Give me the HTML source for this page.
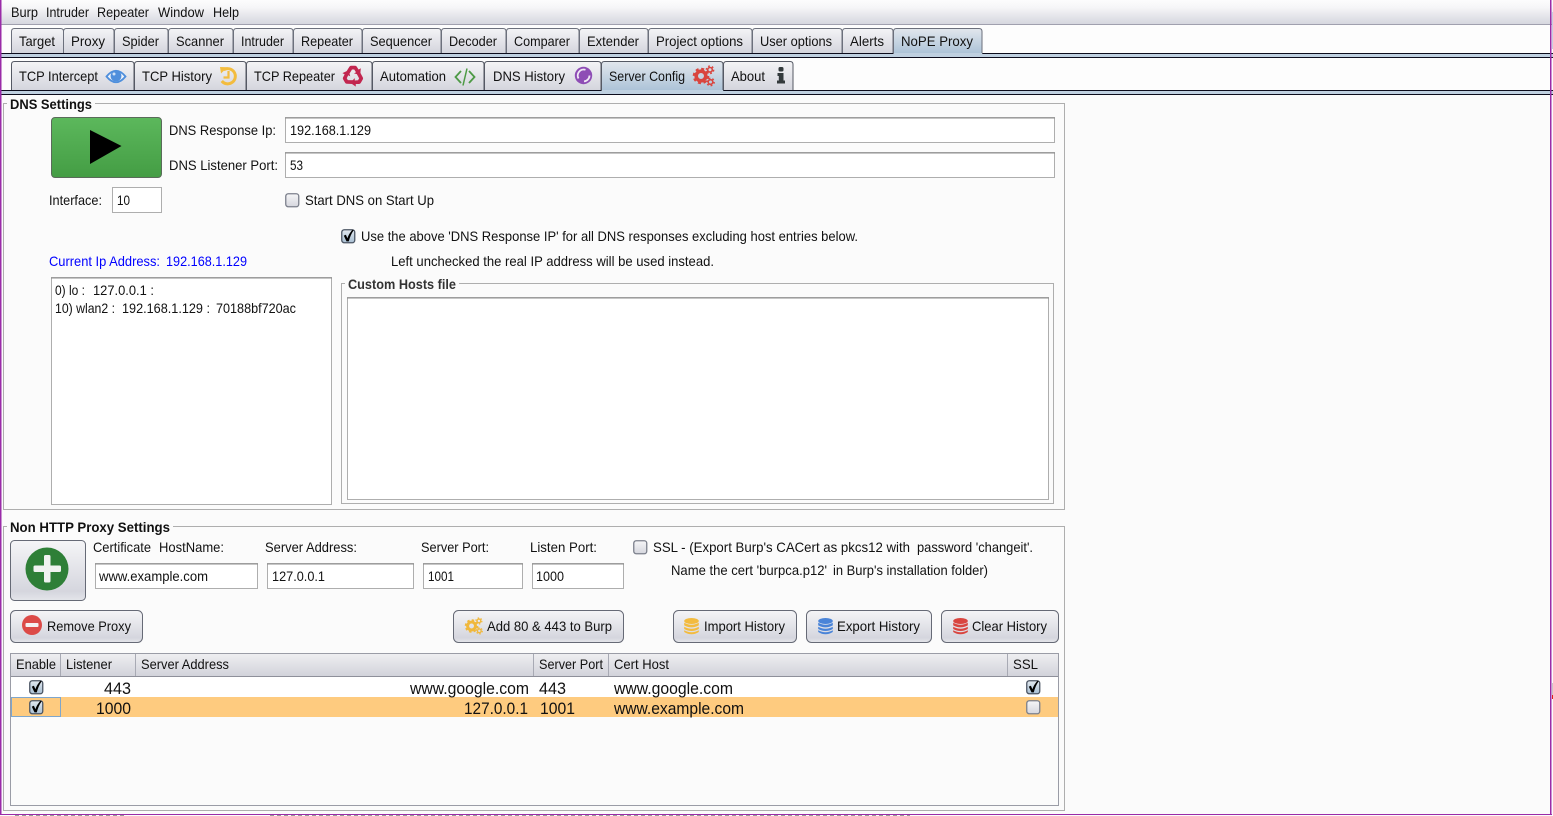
<!DOCTYPE html>
<html><head><meta charset="utf-8"><title>NoPE Proxy</title>
<style>
html,body{margin:0;padding:0;background:#fbfbfb;overflow:hidden;width:1553px;height:816px}
svg{display:block;position:absolute;left:0;top:0}
text{font-family:"Liberation Sans",Arial,sans-serif;font-size:14px;fill:#111}
.b{font-weight:bold}
.r{font-size:16.5px}
</style></head><body>
<svg width="1553" height="816" viewBox="0 0 1553 816" xmlns="http://www.w3.org/2000/svg">
<defs>
<linearGradient id="menu" x1="0" y1="0" x2="0" y2="1"><stop offset="0" stop-color="#fdfdfd"/><stop offset=".3" stop-color="#f6f6f8"/><stop offset="1" stop-color="#d6d7df"/></linearGradient>
<linearGradient id="tab" x1="0" y1="0" x2="0" y2="1"><stop offset="0" stop-color="#f4f4f6"/><stop offset="1" stop-color="#d4d5dd"/></linearGradient>
<linearGradient id="sel" x1="0" y1="0" x2="0" y2="1"><stop offset="0" stop-color="#e2e7ed"/><stop offset="1" stop-color="#abc2d7"/></linearGradient>
<linearGradient id="btn" x1="0" y1="0" x2="0" y2="1"><stop offset="0" stop-color="#f5f5f7"/><stop offset=".85" stop-color="#d5d6de"/><stop offset="1" stop-color="#e4e5ea"/></linearGradient>
<linearGradient id="hdr" x1="0" y1="0" x2="0" y2="1"><stop offset="0" stop-color="#eeeef1"/><stop offset="1" stop-color="#d2d3db"/></linearGradient>
<linearGradient id="green" x1="0" y1="0" x2="0" y2="1"><stop offset="0" stop-color="#5cb85c"/><stop offset="1" stop-color="#449d44"/></linearGradient>
<linearGradient id="cb" x1="0" y1="0" x2="0" y2="1"><stop offset="0" stop-color="#f6f6f8"/><stop offset="1" stop-color="#d5d6de"/></linearGradient>
<linearGradient id="cbc" x1="0" y1="0" x2="0" y2="1"><stop offset="0" stop-color="#e3e9ef"/><stop offset="1" stop-color="#a8bfd3"/></linearGradient>
<symbol id="box" width="15" height="15" viewBox="0 0 15 15" overflow="visible"><rect x=".75" y=".75" width="13" height="13" rx="2.5" fill="url(#cb)" stroke="#7c808c" stroke-width="1.3"/></symbol>
<symbol id="chk" width="15" height="15" viewBox="0 0 15 15" overflow="visible"><rect x=".75" y=".75" width="13" height="13" rx="2.5" fill="url(#cbc)" stroke="#4c5664" stroke-width="1.3"/><path d="M2.800 6.600 L4.900 5.700 L6.400 9.200 Q8 4.600 11.500 .8 L12.700 1.200 Q9.300 6 7.800 12.400 L5.500 12.400 Z" fill="#000"/></symbol>
<symbol id="gears" width="22" height="22" viewBox="0 0 22 22" overflow="visible">
<circle cx="8" cy="11" r="4.800" fill="none" stroke="currentColor" stroke-width="3.600"/>
<circle cx="8" cy="11" r="7.200" fill="none" stroke="currentColor" stroke-width="2.200" stroke-dasharray="3 2.650"/>
<circle cx="17" cy="4.800" r="2.300" fill="none" stroke="currentColor" stroke-width="1.600"/>
<circle cx="17" cy="4.800" r="3.700" fill="none" stroke="currentColor" stroke-width="1.400" stroke-dasharray="1.800 2.050"/>
<circle cx="17.500" cy="17" r="2.300" fill="none" stroke="currentColor" stroke-width="1.600"/>
<circle cx="17.500" cy="17" r="3.700" fill="none" stroke="currentColor" stroke-width="1.400" stroke-dasharray="1.800 2.050"/>
</symbol>
<symbol id="db" width="15" height="17" viewBox="0 0 15 17" overflow="visible" >
<ellipse cx="7.5" cy="3" rx="7.3" ry="3" fill="currentColor"/>
<path d="M.2 4.6 Q7.5 9 14.8 4.6 V7.4 Q7.5 11.4 .2 7.4 Z" fill="currentColor"/>
<path d="M.2 8.8 Q7.5 12.8 14.8 8.8 V11 Q7.5 15 .2 11 Z" fill="currentColor" />
<path d="M.2 12.3 Q7.5 16.2 14.8 12.3 V14 Q7.5 18.6 .2 14 Z" fill="currentColor"/>
</symbol>
<path id="rec" d="M-8.500 -1.500 L-3.600 -9.300 Q-3 -10.200 -2 -10.200 H2.200 Q3.200 -10.200 3.800 -9.300 L5.600 -6.400 L7.800 -7.700 L7.200 -1 L1 -2.600 L3 -3.800 L1.200 -6.500 H-1 L-4.200 -1.300 Z"/>
</defs>

<rect width="1553" height="816" fill="#fbfbfb"/>
<!-- menu bar -->
<rect x="0" y="0" width="1553" height="24" fill="url(#menu)"/>
<rect x="0" y="24" width="1553" height="1" fill="#a0a0ae"/>
<rect x="0" y="25" width="1553" height="28" fill="#fdfdfd"/>
<rect x="0" y="58" width="1553" height="32" fill="#fdfdfd"/>
<text x="11" y="17" textLength="27" lengthAdjust="spacingAndGlyphs">Burp</text>
<text x="46" y="17" textLength="43" lengthAdjust="spacingAndGlyphs">Intruder</text>
<text x="97" y="17" textLength="52" lengthAdjust="spacingAndGlyphs">Repeater</text>
<text x="158" y="17" textLength="46" lengthAdjust="spacingAndGlyphs">Window</text>
<text x="213" y="17" textLength="26" lengthAdjust="spacingAndGlyphs">Help</text>

<!-- separators between tab rows -->
<rect x="0" y="53" width="1553" height="5" fill="#bfd0e0"/>
<rect x="0" y="53" width="1553" height="1" fill="#0c0c1c"/>
<rect x="0" y="57" width="1553" height="1" fill="#0c0c1c"/>
<rect x="0" y="90" width="1553" height="5" fill="#bfd0e0"/>
<rect x="0" y="90" width="1553" height="1" fill="#0c0c1c"/>
<rect x="0" y="94" width="1553" height="1" fill="#0c0c1c"/>

<!-- top tabs -->
<g stroke="#6c707c" stroke-width="1" fill="url(#tab)">
<path d="M11.5 53V31.5q0-3 3-3H60.5q3 0 3 3V53"/>
<path d="M63.5 53V31.5q0-3 3-3H111q3 0 3 3V53"/>
<path d="M114.5 53V31.5q0-3 3-3H165q3 0 3 3V53"/>
<path d="M168.5 53V31.5q0-3 3-3H230q3 0 3 3V53"/>
<path d="M233.5 53V31.5q0-3 3-3H290q3 0 3 3V53"/>
<path d="M293.5 53V31.5q0-3 3-3H359q3 0 3 3V53"/>
<path d="M362.5 53V31.5q0-3 3-3H438q3 0 3 3V53"/>
<path d="M441.5 53V31.5q0-3 3-3H503q3 0 3 3V53"/>
<path d="M506.5 53V31.5q0-3 3-3H576q3 0 3 3V53"/>
<path d="M579.5 53V31.5q0-3 3-3H645q3 0 3 3V53"/>
<path d="M648.5 53V31.5q0-3 3-3H749q3 0 3 3V53"/>
<path d="M752.5 53V31.5q0-3 3-3H839q3 0 3 3V53"/>
<path d="M842.5 53V31.5q0-3 3-3H890q3 0 3 3V53"/>
<path d="M893.5 54V31.5q0-3 3-3H979q3 0 3 3V54" fill="url(#sel)"/>
</g>
<rect x="894" y="53" width="88" height="4" fill="#bfd0e0"/>
<text x="19" y="46" textLength="36" lengthAdjust="spacingAndGlyphs">Target</text>
<text x="71" y="46" textLength="34" lengthAdjust="spacingAndGlyphs">Proxy</text>
<text x="122" y="46" textLength="37" lengthAdjust="spacingAndGlyphs">Spider</text>
<text x="176" y="46" textLength="48" lengthAdjust="spacingAndGlyphs">Scanner</text>
<text x="241" y="46" textLength="43" lengthAdjust="spacingAndGlyphs">Intruder</text>
<text x="301" y="46" textLength="52" lengthAdjust="spacingAndGlyphs">Repeater</text>
<text x="370" y="46" textLength="62" lengthAdjust="spacingAndGlyphs">Sequencer</text>
<text x="449" y="46" textLength="48" lengthAdjust="spacingAndGlyphs">Decoder</text>
<text x="514" y="46" textLength="56" lengthAdjust="spacingAndGlyphs">Comparer</text>
<text x="587" y="46" textLength="52" lengthAdjust="spacingAndGlyphs">Extender</text>
<text x="656" y="46" textLength="87" lengthAdjust="spacingAndGlyphs">Project options</text>
<text x="760" y="46" textLength="72" lengthAdjust="spacingAndGlyphs">User options</text>
<text x="850" y="46" textLength="34" lengthAdjust="spacingAndGlyphs">Alerts</text>
<text x="901" y="46" textLength="72" lengthAdjust="spacingAndGlyphs">NoPE Proxy</text>

<!-- second tabs -->
<g stroke="#555964" stroke-width="1" fill="url(#tab)">
<path d="M11.5 90V64.5q0-3 3-3H131q3 0 3 3V90"/>
<path d="M134.5 90V64.5q0-3 3-3H243q3 0 3 3V90"/>
<path d="M246.5 90V64.5q0-3 3-3H369q3 0 3 3V90"/>
<path d="M372.5 90V64.5q0-3 3-3H481q3 0 3 3V90"/>
<path d="M484.5 90V64.5q0-3 3-3H598q3 0 3 3V90"/>
<path d="M723.5 90V64.5q0-3 3-3H790q3 0 3 3V90"/>
<path d="M601.5 91V64.5q0-3 3-3H720q3 0 3 3V91" fill="url(#sel)"/>
</g>
<rect x="602" y="90" width="121" height="4" fill="#bfd0e0"/>
<text x="19" y="81" textLength="79" lengthAdjust="spacingAndGlyphs">TCP Intercept</text>
<text x="142" y="81" textLength="70" lengthAdjust="spacingAndGlyphs">TCP History</text>
<text x="254" y="81" textLength="81" lengthAdjust="spacingAndGlyphs">TCP Repeater</text>
<text x="380" y="81" textLength="66" lengthAdjust="spacingAndGlyphs">Automation</text>
<text x="493" y="81" textLength="72" lengthAdjust="spacingAndGlyphs">DNS History</text>
<text x="609" y="81" textLength="76" lengthAdjust="spacingAndGlyphs">Server Config</text>
<text x="731" y="81" textLength="34" lengthAdjust="spacingAndGlyphs">About</text>

<!-- eye -->
<path d="M106.500 76.500 Q116 65 125.500 76.500 Q116 88 106.500 76.500 Z" fill="#eef3fa" stroke="#4f8fdc" stroke-width="1.800"/>
<circle cx="116" cy="76" r="5.400" fill="#4f8fdc"/>
<circle cx="114" cy="74" r="1.500" fill="#cfe2f7"/>
<!-- clock history -->
<path d="M223.700 69.800 A7.600 7.600 0 1 1 221.800 81" fill="none" stroke="#f3bc3e" stroke-width="3"/>
<path d="M220 67 L227.500 67.300 L221 73.500 Z" fill="#f3bc3e"/>
<path d="M228.500 71 V77.500 H223.500" fill="none" stroke="#f3bc3e" stroke-width="2.200"/>
<!-- recycle -->
<g fill="#c2264f" transform="translate(353 76)">
<use href="#rec"/>
<use href="#rec" transform="rotate(120)"/>
<use href="#rec" transform="rotate(240)"/>
</g>
<!-- code -->
<path d="M461 71 L455.500 77 L461 83 M469 71 L474.500 77 L469 83" fill="none" stroke="#4d9a45" stroke-width="1.800"/>
<path d="M467 68.500 L463 85.500" stroke="#4d9a45" stroke-width="1.500" fill="none"/>
<!-- globe -->
<circle cx="583.500" cy="75.500" r="8.700" fill="#8e4db5"/>
<path d="M585.500 69.800 A6 6 0 0 0 578.500 78.500" fill="none" stroke="#f0e8f5" stroke-width="1.800"/>
<path d="M589.500 75.500 A6 6 0 0 1 584 81.400" fill="none" stroke="#f0e8f5" stroke-width="1.800"/>
<!-- red gears -->
<use href="#gears" x="693" y="65" style="color:#d9453f"/>
<!-- info -->
<rect x="778.500" y="67" width="5" height="4.500" rx="1.500" fill="#333a3c"/>
<path d="M777.500 73 H783.500 V80.500 H785 V83.500 H777 V80.500 H778.800 V76 H777.500 Z" fill="#333a3c"/>

<!-- DNS settings fieldset -->
<rect x="3.500" y="103.500" width="1061" height="406" fill="none" stroke="#aeaeae"/>
<rect x="7" y="100" width="88" height="10" fill="#fbfbfb"/>
<text class="b" x="10" y="109" textLength="82" lengthAdjust="spacingAndGlyphs">DNS Settings</text>

<rect x="51.500" y="117.500" width="110" height="60" rx="3.500" fill="url(#green)" stroke="#5a6b5a"/>
<path d="M90 130 L121.500 146 L90 164 Z" fill="#000"/>

<text x="169" y="135" textLength="107" lengthAdjust="spacingAndGlyphs">DNS Response Ip:</text>
<rect x="285.500" y="117.500" width="769" height="25" fill="#fff" stroke="#aeaeae"/>
<path d="M285 118H1055" stroke="#8c8c8c"/>
<text x="290" y="135" textLength="81" lengthAdjust="spacingAndGlyphs">192.168.1.129</text>
<text x="169" y="170" textLength="109" lengthAdjust="spacingAndGlyphs">DNS Listener Port:</text>
<rect x="285.500" y="152.500" width="769" height="25" fill="#fff" stroke="#aeaeae"/>
<path d="M285 153H1055" stroke="#8c8c8c"/>
<text x="290" y="170" textLength="13" lengthAdjust="spacingAndGlyphs">53</text>

<text x="49" y="205" textLength="53" lengthAdjust="spacingAndGlyphs">Interface:</text>
<rect x="112.500" y="187.500" width="49" height="25" fill="#fff" stroke="#aeaeae"/>
<text x="117" y="205" textLength="13" lengthAdjust="spacingAndGlyphs">10</text>
<use href="#box" x="285" y="193"/>
<text x="305" y="205" textLength="129" lengthAdjust="spacingAndGlyphs">Start DNS on Start Up</text>
<use href="#chk" x="341" y="229"/>
<text x="361" y="241" textLength="497" lengthAdjust="spacingAndGlyphs">Use the above 'DNS Response IP' for all DNS responses excluding host entries below.</text>
<text x="391" y="266" textLength="323" lengthAdjust="spacingAndGlyphs">Left unchecked the real IP address will be used instead.</text>
<text x="49" y="266" textLength="111" lengthAdjust="spacingAndGlyphs" style="fill:#0000ff">Current Ip Address:</text>
<text x="166" y="266" textLength="81" lengthAdjust="spacingAndGlyphs" style="fill:#0000ff">192.168.1.129</text>

<rect x="51.500" y="277.500" width="280" height="227" fill="#fff" stroke="#aeaeae"/>
<path d="M51 278H332" stroke="#8c8c8c"/>
<text x="55" y="295" textLength="30" lengthAdjust="spacingAndGlyphs">0) lo :</text>
<text x="93" y="295" textLength="61" lengthAdjust="spacingAndGlyphs">127.0.0.1 :</text>
<text x="55" y="313" textLength="60" lengthAdjust="spacingAndGlyphs">10) wlan2 :</text>
<text x="122" y="313" textLength="88" lengthAdjust="spacingAndGlyphs">192.168.1.129 :</text>
<text x="216" y="313" textLength="80" lengthAdjust="spacingAndGlyphs">70188bf720ac</text>

<rect x="341.500" y="283.500" width="712" height="220" fill="none" stroke="#aeaeae"/>
<rect x="345" y="278" width="114" height="12" fill="#fbfbfb"/>
<text class="b" x="348" y="289" textLength="108" lengthAdjust="spacingAndGlyphs" style="fill:#333">Custom Hosts file</text>
<rect x="347.500" y="297.500" width="701" height="202" fill="#fff" stroke="#aeaeae"/>
<path d="M347 298H1049" stroke="#8c8c8c"/>

<!-- Non HTTP -->
<rect x="3.500" y="526.500" width="1061" height="284" fill="none" stroke="#aeaeae"/>
<rect x="7" y="522" width="166" height="10" fill="#fbfbfb"/>
<text class="b" x="10" y="532" textLength="160" lengthAdjust="spacingAndGlyphs">Non HTTP Proxy Settings</text>

<rect x="10.500" y="540.500" width="75" height="60" rx="4" fill="url(#btn)" stroke="#666a76"/>
<circle cx="47" cy="569" r="21.500" fill="#2e7f37"/>
<path d="M44 556.500 Q44 555 45.500 555 H49 Q50.500 555 50.500 556.500 V565.500 H59.500 Q61 565.500 61 567 V570.500 Q61 572 59.500 572 H50.500 V581 Q50.500 582.500 49 582.500 H45.500 Q44 582.500 44 581 V572 H35 Q33.500 572 33.500 570.500 V567 Q33.500 565.500 35 565.500 H44 Z" fill="#f0f2f0"/>

<text x="93" y="552" textLength="58" lengthAdjust="spacingAndGlyphs">Certificate</text>
<text x="159" y="552" textLength="65" lengthAdjust="spacingAndGlyphs">HostName:</text>
<text x="265" y="552" textLength="92" lengthAdjust="spacingAndGlyphs">Server Address:</text>
<text x="421" y="552" textLength="68" lengthAdjust="spacingAndGlyphs">Server Port:</text>
<text x="530" y="552" textLength="67" lengthAdjust="spacingAndGlyphs">Listen Port:</text>
<use href="#box" x="633" y="540"/>
<text x="653" y="552" textLength="257" lengthAdjust="spacingAndGlyphs">SSL - (Export Burp's CACert as pkcs12 with</text>
<text x="917" y="552" textLength="116" lengthAdjust="spacingAndGlyphs">password 'changeit'.</text>
<text x="671" y="575" textLength="156" lengthAdjust="spacingAndGlyphs">Name the cert 'burpca.p12'</text>
<text x="833" y="575" textLength="155" lengthAdjust="spacingAndGlyphs">in Burp's installation folder)</text>

<g fill="#fff" stroke="#aeaeae">
<rect x="95.500" y="563.500" width="162" height="25"/>
<rect x="267.500" y="563.500" width="146" height="25"/>
<rect x="423.500" y="563.500" width="99" height="25"/>
<rect x="532.500" y="563.500" width="91" height="25"/>
</g>
<path d="M95 564H258M267 564H414M423 564H523M532 564H624" stroke="#8c8c8c"/>
<text x="99" y="581" textLength="109" lengthAdjust="spacingAndGlyphs">www.example.com</text>
<text x="272" y="581" textLength="53" lengthAdjust="spacingAndGlyphs">127.0.0.1</text>
<text x="428" y="581" textLength="26" lengthAdjust="spacingAndGlyphs">1001</text>
<text x="536" y="581" textLength="28" lengthAdjust="spacingAndGlyphs">1000</text>

<!-- buttons -->
<g fill="url(#btn)" stroke="#666a76">
<rect x="10.500" y="610.500" width="132" height="32" rx="5"/>
<rect x="453.500" y="610.500" width="170" height="32" rx="5"/>
<rect x="673.500" y="610.500" width="123" height="32" rx="5"/>
<rect x="806.500" y="610.500" width="125" height="32" rx="5"/>
<rect x="941.500" y="610.500" width="117" height="32" rx="5"/>
</g>
<circle cx="32" cy="625" r="10" fill="#dc4a47"/>
<rect x="25.500" y="623" width="13" height="4" rx="1" fill="#f4f0f0"/>
<text x="47" y="631" textLength="84" lengthAdjust="spacingAndGlyphs">Remove Proxy</text>
<use href="#gears" x="465" y="617" width="18" height="18" style="color:#f0b83c"/>
<text x="487" y="631" textLength="125" lengthAdjust="spacingAndGlyphs">Add 80 &amp; 443 to Burp</text>
<use href="#db" x="684" y="618" style="color:#f3bb3e"/>
<text x="704" y="631" textLength="81" lengthAdjust="spacingAndGlyphs">Import History</text>
<use href="#db" x="818" y="618" style="color:#4a84d8"/>
<text x="837" y="631" textLength="83" lengthAdjust="spacingAndGlyphs">Export History</text>
<use href="#db" x="953" y="618" style="color:#d9453f"/>
<text x="972" y="631" textLength="75" lengthAdjust="spacingAndGlyphs">Clear History</text>

<!-- table -->
<rect x="10.500" y="653.500" width="1048" height="152" fill="#fbfbfb" stroke="#9a9ca6"/>
<rect x="11" y="654" width="1047" height="22" fill="url(#hdr)"/>
<rect x="11" y="676" width="1047" height="1" fill="#8e909a"/>
<path d="M60.500 654V676M135.500 654V676M533.500 654V676M608.500 654V676M1007.500 654V676" stroke="#a8aab4"/>
<text x="16" y="669" textLength="40" lengthAdjust="spacingAndGlyphs">Enable</text>
<text x="66" y="669" textLength="46" lengthAdjust="spacingAndGlyphs">Listener</text>
<text x="141" y="669" textLength="88" lengthAdjust="spacingAndGlyphs">Server Address</text>
<text x="539" y="669" textLength="64" lengthAdjust="spacingAndGlyphs">Server Port</text>
<text x="614" y="669" textLength="55" lengthAdjust="spacingAndGlyphs">Cert Host</text>
<text x="1013" y="669" textLength="25" lengthAdjust="spacingAndGlyphs">SSL</text>
<rect x="11" y="677" width="1047" height="20" fill="#fff"/>
<rect x="11" y="697" width="1047" height="20" fill="#fecb7f"/>
<rect x="11.500" y="697.500" width="49" height="19" fill="none" stroke="#7ea6cc"/>
<use href="#chk" x="29" y="680"/>
<use href="#chk" x="29" y="700"/>
<use href="#chk" x="1026" y="680"/>
<use href="#box" x="1026" y="700"/>
<text class="r" x="104" y="694" textLength="27" lengthAdjust="spacingAndGlyphs">443</text>
<text class="r" x="96" y="714" textLength="35" lengthAdjust="spacingAndGlyphs">1000</text>
<text class="r" x="410" y="694" textLength="119" lengthAdjust="spacingAndGlyphs">www.google.com</text>
<text class="r" x="464" y="714" textLength="64" lengthAdjust="spacingAndGlyphs">127.0.0.1</text>
<text class="r" x="539" y="694" textLength="27" lengthAdjust="spacingAndGlyphs">443</text>
<text class="r" x="540" y="714" textLength="35" lengthAdjust="spacingAndGlyphs">1001</text>
<text class="r" x="614" y="694" textLength="119" lengthAdjust="spacingAndGlyphs">www.google.com</text>
<text class="r" x="614" y="714" textLength="130" lengthAdjust="spacingAndGlyphs">www.example.com</text>

<!-- window frame -->
<rect x="0" y="0" width="1.500" height="815" fill="#9a2ba8"/>
<rect x="1550" y="0" width="1.500" height="815" fill="#9a2ba8"/>
<rect x="0" y="814" width="1552" height="1" fill="#9a2ba8"/>
<rect x="1552" y="12" width="1" height="37" fill="#c6cfe0"/>
<rect x="1552" y="683" width="1" height="14" fill="#c8c8c8"/>
<rect x="1552" y="695" width="1" height="4" fill="#e02020"/>
<path d="M15 815.500H125M270 815.500H910" stroke="#999" stroke-dasharray="4 3"/>
</svg>
</body></html>
